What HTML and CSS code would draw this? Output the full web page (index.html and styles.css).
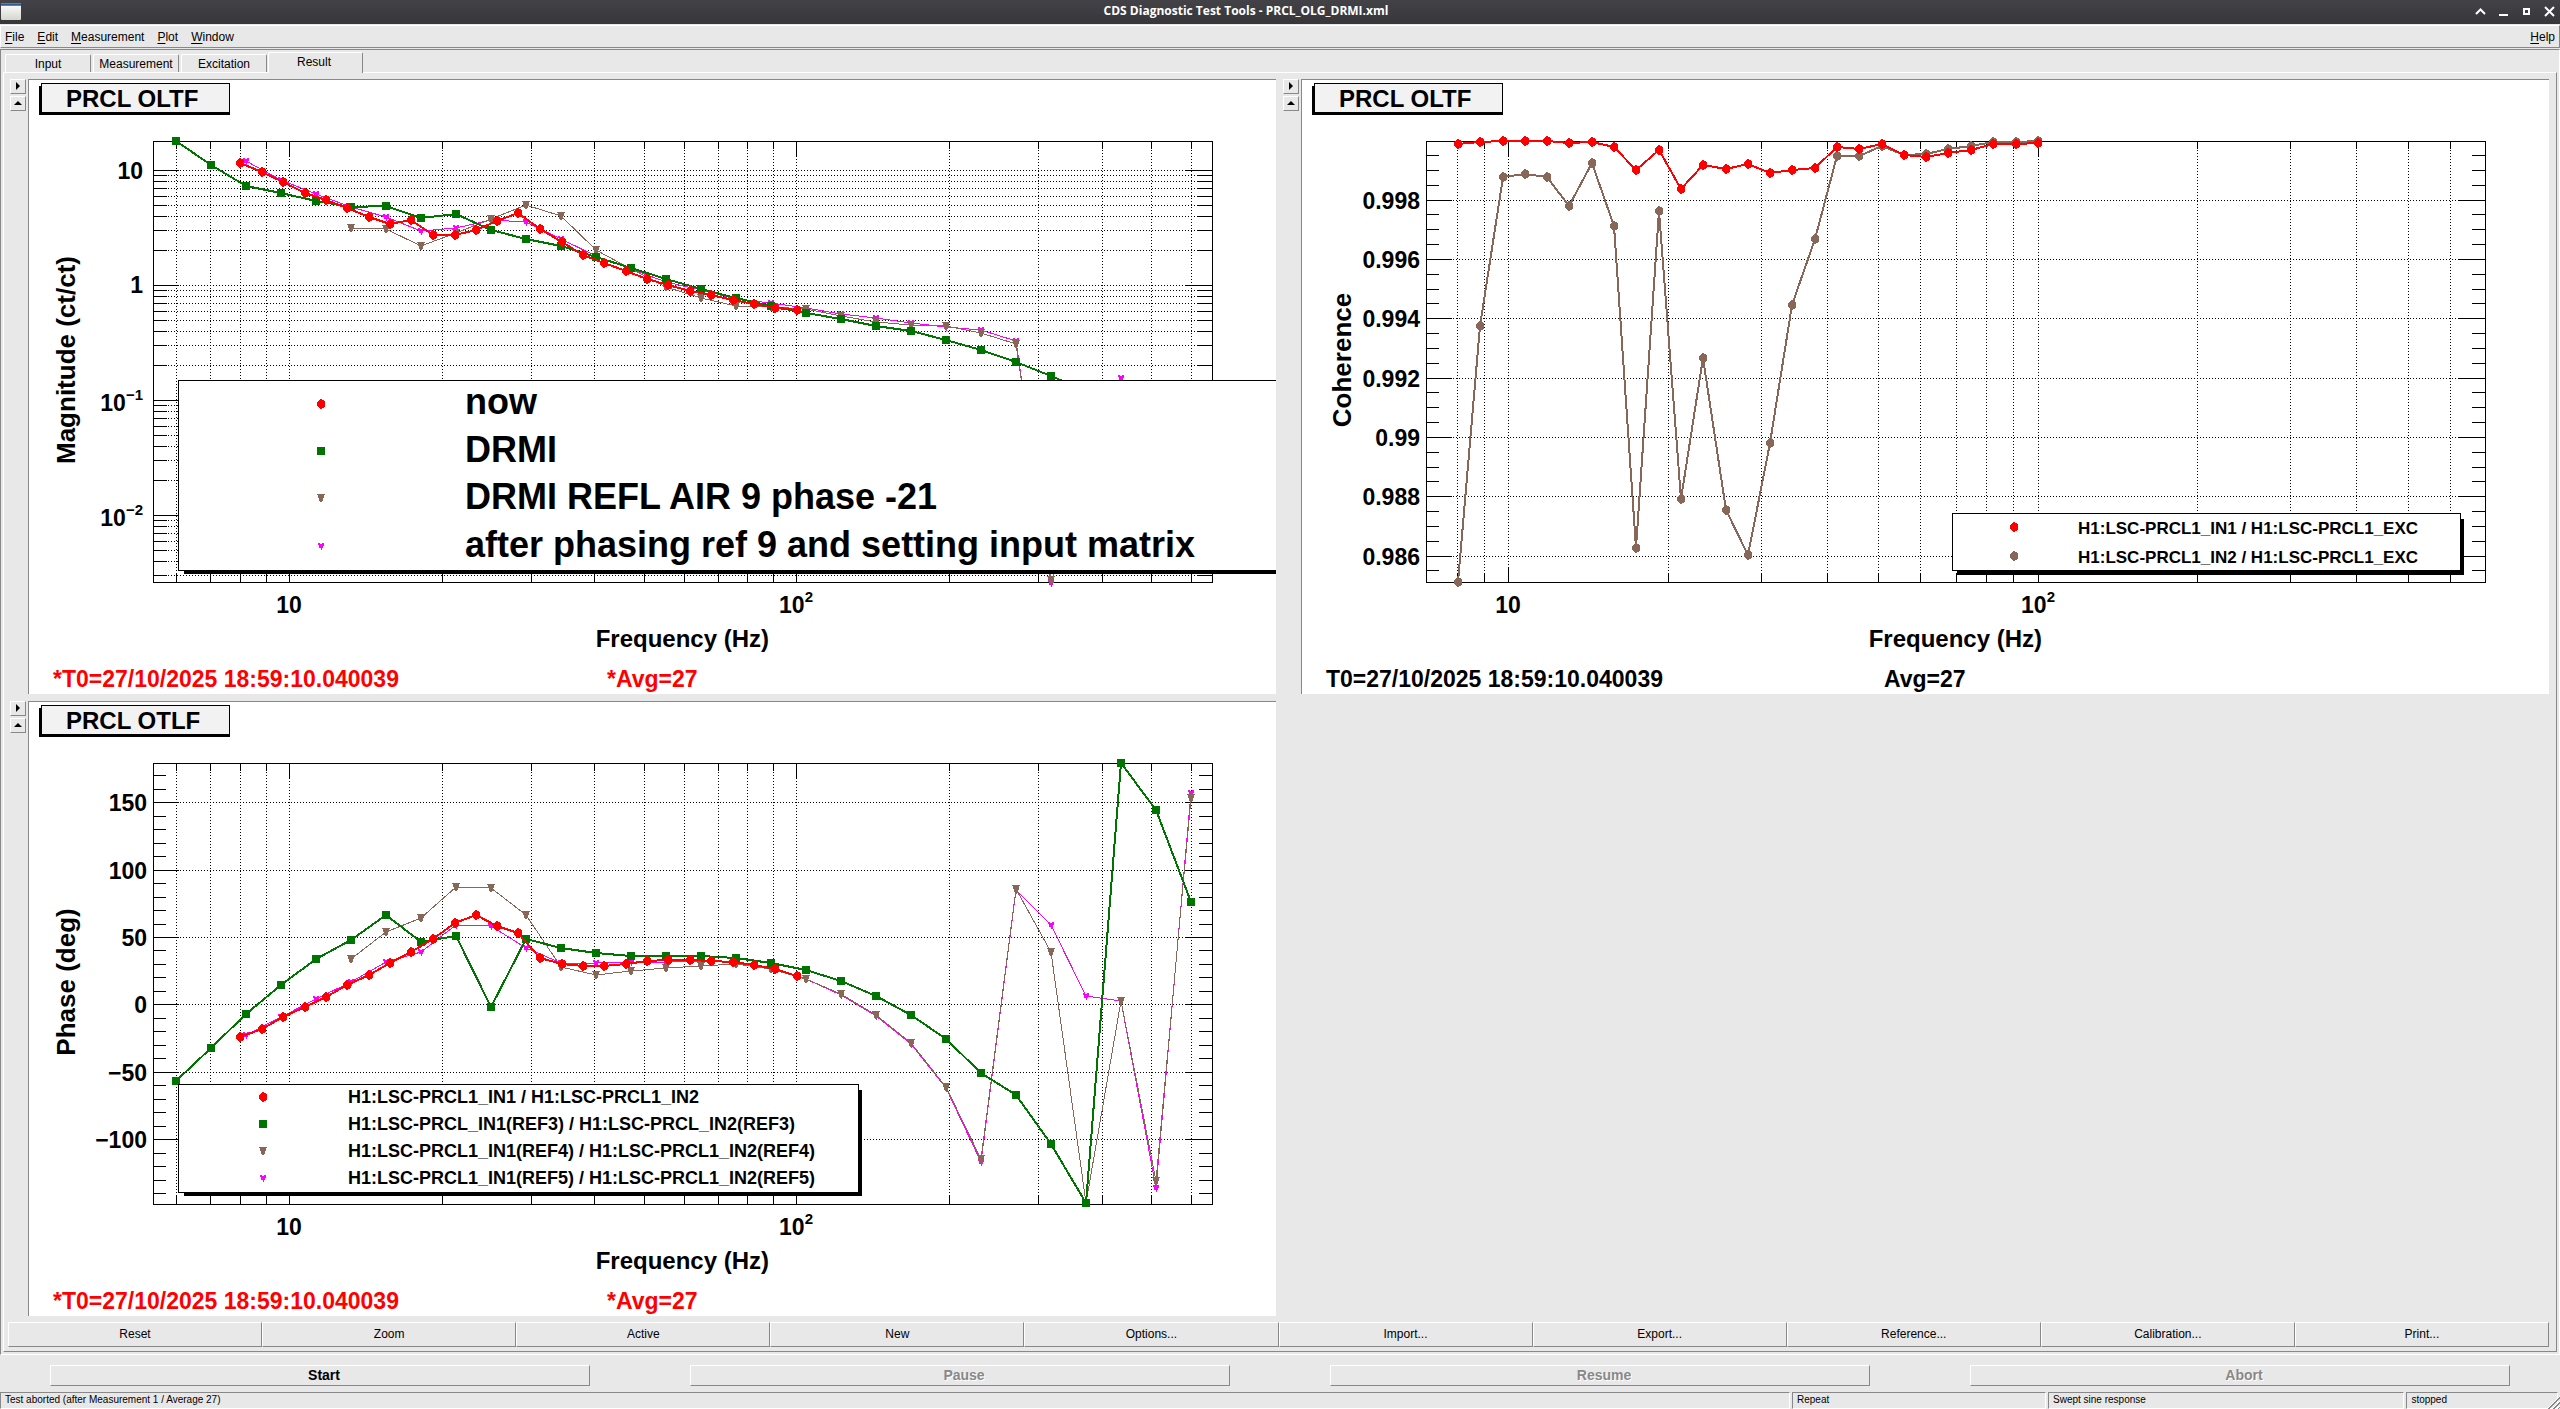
FILE: index.html
```html
<!DOCTYPE html>
<html lang="en">
<head>
<meta charset="utf-8">
<title>CDS Diagnostic Test Tools - PRCL_OLG_DRMI.xml</title>
<link rel="stylesheet" href="styles.css">
</head>
<body>
<header class="titlebar">
  <svg class="app-icon" viewBox="0 0 20 17" aria-hidden="true">
    <defs><linearGradient id="icon-fill" x2="0" y2="1"><stop offset="0" stop-color="#fff"/><stop offset="1" stop-color="#d6d6ce"/></linearGradient></defs>
    <rect width="20" height="17" rx="1" fill="url(#icon-fill)"/>
    <rect width="20" height="3" fill="#5b7fb5"/>
    <rect y="1" width="20" height="1" fill="#2f5a96"/>
  </svg>
  <h1 class="window-title">CDS Diagnostic Test Tools - PRCL_OLG_DRMI.xml</h1>
  <div class="window-controls">
    <button type="button" aria-label="Shade"><svg viewBox="0 0 11 11"><path d="M1 8 5.500 3.500 10 8" fill="none" stroke="#fff" stroke-width="2"/></svg></button>
    <button type="button" aria-label="Minimize"><svg viewBox="0 0 11 11"><path d="M1 9h9" stroke="#fff" stroke-width="2"/></svg></button>
    <button type="button" aria-label="Maximize"><svg viewBox="0 0 11 11"><path d="M3 3h5v5H3z" fill="none" stroke="#fff" stroke-width="2"/></svg></button>
    <button type="button" aria-label="Close"><svg viewBox="0 0 11 11"><path d="M1 1l9 9M10 1l-9 9" stroke="#fff" stroke-width="2"/></svg></button>
  </div>
</header>

<nav class="menubar">
  <button type="button"><u>F</u>ile</button>
  <button type="button"><u>E</u>dit</button>
  <button type="button"><u>M</u>easurement</button>
  <button type="button"><u>P</u>lot</button>
  <button type="button"><u>W</u>indow</button>
  <button type="button" class="help"><u>H</u>elp</button>
</nav>

<main class="frame">
  <div class="tabs" role="tablist">
    <button type="button" role="tab" class="tab">Input</button>
    <button type="button" role="tab" class="tab">Measurement</button>
    <button type="button" role="tab" class="tab">Excitation</button>
    <button type="button" role="tab" class="tab active" aria-selected="true">Result</button>
  </div>

  <section class="panel">
    <div class="plots">
      <article class="plot">
        <div class="plot-tools">
          <button type="button" aria-label="Expand options"><svg viewBox="0 0 14 13"><path d="M5 2v8l4-4z"/></svg></button>
          <button type="button" aria-label="Collapse plot"><svg viewBox="0 0 14 13"><path d="M3 8h8L7 4z"/></svg></button>
        </div>
        <div class="canvas">
          <svg class="chart" viewBox="29 80 1247 614" role="img" aria-label="PRCL OLTF magnitude">
            <defs>
              <marker id="dot" class="mark" markerUnits="userSpaceOnUse" markerWidth="10" markerHeight="12" viewBox="-5 -6 10 12"><path fill="#f00" d="M-4-2-2-4h1v-1h2v1h1l2 2v4L2 4H1v1h-2V4h-1l-2-2z"/></marker>
              <marker id="brown-dot" class="mark" markerUnits="userSpaceOnUse" markerWidth="10" markerHeight="12" viewBox="-5 -6 10 12"><path fill="#886658" d="M-4-2-2-4h1v-1h2v1h1l2 2v4L2 4H1v1h-2V4h-1l-2-2z"/></marker>
              <marker id="square" class="mark" markerUnits="userSpaceOnUse" markerWidth="10" markerHeight="10" viewBox="-5 -5 10 10"><path fill="#007400" d="M-4-4h8v8h-8z"/></marker>
              <marker id="triangle" class="mark" markerUnits="userSpaceOnUse" markerWidth="10" markerHeight="10" viewBox="-5 -5 10 10"><path fill="#886658" d="M-4-4h8L1 4h-2z"/></marker>
              <marker id="star" class="mark" markerUnits="userSpaceOnUse" markerWidth="10" markerHeight="10" viewBox="-5 -5 10 10"><path fill="#f0f" d="M-3-3h1l2 1 2-1h1v2L2 0v2H1v2H0V2h-2V0l-1-1z"/></marker>
              <path id="response-x-grid" d="M176 141V582M210 141V582M240 141V582M266 141V582M289 141V582M442 141V582M531 141V582M594 141V582M644 141V582M684 141V582M718 141V582M747 141V582M773 141V582M796 141V582M949 141V582M1038 141V582M1102 141V582M1151 141V582M1191 141V582"/>
              <path id="response-x-ticks" d="M176 141v8M210 141v8M240 141v8M266 141v8M289 141v15M442 141v8M531 141v8M594 141v8M644 141v8M684 141v8M718 141v8M747 141v8M773 141v8M796 141v15M949 141v8M1038 141v8M1102 141v8M1151 141v8M1191 141v8"/>
              <path id="magnitude-ticks" d="M153 170h26M153 175h14M153 181h14M153 188h14M153 196h14M153 205h14M153 216h14M153 230h14M153 250h14M153 285h26M153 290h14M153 296h14M153 303h14M153 311h14M153 320h14M153 331h14M153 345h14M153 365h14M153 400h26M153 405h14M153 411h14M153 418h14M153 426h14M153 435h14M153 446h14M153 460h14M153 480h14M153 515h26M153 520h14M153 526h14M153 533h14M153 541h14M153 550h14M153 561h14M153 575h14"/>
            </defs>
            <g class="title"><path class="shadow" d="M39 86H230V115H39z"/><rect x="41" y="83" width="188" height="29"/><text x="66" y="107">PRCL OLTF</text></g>
            <g class="grid">
              <use href="#response-x-grid"/>
              <path d="M153 170H1212M153 175H1212M153 181H1212M153 188H1212M153 196H1212M153 205H1212M153 216H1212M153 230H1212M153 250H1212M153 285H1212M153 290H1212M153 296H1212M153 303H1212M153 311H1212M153 320H1212M153 331H1212M153 345H1212M153 365H1212M153 400H1212M153 405H1212M153 411H1212M153 418H1212M153 426H1212M153 435H1212M153 446H1212M153 460H1212M153 480H1212M153 515H1212M153 520H1212M153 526H1212M153 533H1212M153 541H1212M153 550H1212M153 561H1212M153 575H1212"/>
            </g>
            <g class="axes">
              <rect x="153" y="141" width="1059" height="441"/>
              <use href="#response-x-ticks"/><use href="#response-x-ticks" transform="translate(0 723) scale(1 -1)"/>
              <use href="#magnitude-ticks"/><use href="#magnitude-ticks" transform="translate(1365) scale(-1 1)"/>
            </g>
            <polyline class="series magenta" points="246,161 281,180 316,194 351,207 386,217 421,231 456,228 491,220 526,222 561,239 596,256 631,269 666,282 701,290 736,299 771,303 806,308 841,314 876,318 911,323 946,327 981,330 1016,341 1051,583 1086,480 1121,378"/>
            <polyline class="series brown" points="351,228 386,229 421,246 456,233 491,219 526,205 561,216 596,250 631,269 666,287 701,298 736,306 771,307 806,309 841,316 876,322 911,325 946,326 981,333 1016,344 1051,580"/>
            <polyline class="series green" points="176,141 211,165 246,186 281,193 316,201 351,207 386,206 421,218 456,214 491,230 526,239 561,246 596,257 631,268 666,279 701,289 736,298 771,306 806,313 841,319 876,326 911,331 946,340 981,350 1016,362 1051,376 1086,391"/>
            <polyline class="series red" points="240,163 262,172 283,182 305,193 326,200 347,208 369,217 390,224 411,220 433,235 455,235 476,230 497,221 518,213 540,229 562,242 583,255 604,263 626,271 647,279 668,285 690,291 711,295 733,300 754,304 775,308 797,310"/>
            <g class="legend large">
              <path class="shadow" d="M184 386H1290V574H184z"/><rect x="178" y="380" width="1106" height="190"/>
              <polyline class="series red" points="321,404 321,404"/><text x="465" y="414">now</text>
              <polyline class="series green" points="321,451 321,451"/><text x="465" y="462">DRMI</text>
              <polyline class="series brown" points="321,498 321,498"/><text x="465" y="509">DRMI REFL AIR 9 phase -21</text>
              <polyline class="series magenta" points="321,546 321,546"/><text x="465" y="557">after phasing ref 9 and setting input matrix</text>
            </g>
            <g class="ticks-y">
              <text x="143" y="179">10</text><text x="143" y="293">1</text>
              <text x="143" y="411">10<tspan class="sup" dy="-11">−1</tspan></text>
              <text x="143" y="526">10<tspan class="sup" dy="-11">−2</tspan></text>
            </g>
            <g class="ticks-x"><text x="289" y="613">10</text><text x="796" y="613">10<tspan class="sup" dy="-11">2</tspan></text></g>
            <text class="axis-name" transform="translate(75 360) rotate(-90)">Magnitude (ct/ct)</text>
            <text class="axis-x" x="769" y="647">Frequency (Hz)</text>
            <g class="stamp live"><text x="53" y="687">*T0=27/10/2025 18:59:10.040039</text><text x="607" y="687">*Avg=27</text></g>
          </svg>
        </div>
      </article>

      <article class="plot">
        <div class="plot-tools">
          <button type="button" aria-label="Expand options"><svg viewBox="0 0 14 13"><path d="M5 2v8l4-4z"/></svg></button>
          <button type="button" aria-label="Collapse plot"><svg viewBox="0 0 14 13"><path d="M3 8h8L7 4z"/></svg></button>
        </div>
        <div class="canvas">
          <svg class="chart" viewBox="29 80 1247 614" role="img" aria-label="PRCL OLTF coherence">
            <defs>
              <path id="coherence-x-ticks" d="M184 141v8M211 141v8M235 141v15M395 141v8M488 141v8M554 141v8M605 141v8M647 141v8M683 141v8M713 141v8M740 141v8M765 141v15M924 141v8M1017 141v8M1083 141v8M1135 141v8M1177 141v8"/>
              <path id="coherence-ticks" d="M153 155h13M153 170h13M153 185h13M153 200h26M153 214h13M153 229h13M153 244h13M153 259h26M153 274h13M153 289h13M153 303h13M153 318h26M153 333h13M153 348h13M153 363h13M153 378h26M153 392h13M153 407h13M153 422h13M153 437h26M153 452h13M153 467h13M153 481h13M153 496h26M153 511h13M153 526h13M153 541h13M153 556h26M153 570h13"/>
            </defs>
            <g class="title"><path class="shadow" d="M39 86H230V115H39z"/><rect x="41" y="83" width="188" height="29"/><text x="66" y="107">PRCL OLTF</text></g>
            <g class="grid">
              <path d="M184 141V582M211 141V582M235 141V582M395 141V582M488 141V582M554 141V582M605 141V582M647 141V582M683 141V582M713 141V582M740 141V582M765 141V582M924 141V582M1017 141V582M1083 141V582M1135 141V582M1177 141V582"/>
              <path d="M153 200H1212M153 259H1212M153 318H1212M153 378H1212M153 437H1212M153 496H1212M153 556H1212"/>
            </g>
            <g class="axes">
              <rect x="153" y="141" width="1059" height="441"/>
              <use href="#coherence-x-ticks"/><use href="#coherence-x-ticks" transform="translate(0 723) scale(1 -1)"/>
              <use href="#coherence-ticks"/><use href="#coherence-ticks" transform="translate(1365) scale(-1 1)"/>
            </g>
            <polyline class="series umber" points="185,582 207,326 230,177 252,174 274,177 296,206 319,163 341,226 363,548 386,211 408,499 430,358 453,510 475,555 497,443 519,305 542,239 564,156 586,156 609,146 631,155 653,154 675,149 698,146 720,142 743,142 765,141"/>
            <polyline class="series red" points="185,144 207,142 230,141 252,141 274,141 296,143 319,142 341,147 363,170 386,150 408,189 430,165 453,169 475,164 497,173 519,170 542,168 564,147 586,149 609,144 631,155 653,157 675,153 698,150 720,144 743,144 765,143"/>
            <g class="legend small">
              <path class="shadow" d="M684 519H1191V575H684z"/><rect x="679" y="513" width="508" height="57"/>
              <polyline class="series red" points="741,527 741,527"/><text x="805" y="534">H1:LSC-PRCL1_IN1 / H1:LSC-PRCL1_EXC</text>
              <polyline class="series umber" points="741,556 741,556"/><text x="805" y="563">H1:LSC-PRCL1_IN2 / H1:LSC-PRCL1_EXC</text>
            </g>
            <g class="ticks-y">
              <text x="147" y="209">0.998</text><text x="147" y="268">0.996</text><text x="147" y="327">0.994</text><text x="147" y="387">0.992</text><text x="147" y="446">0.99</text><text x="147" y="505">0.988</text><text x="147" y="565">0.986</text>
            </g>
            <g class="ticks-x"><text x="235" y="613">10</text><text x="765" y="613">10<tspan class="sup" dy="-11">2</tspan></text></g>
            <text class="axis-name" transform="translate(78 360) rotate(-90)">Coherence</text>
            <text class="axis-x" x="769" y="647">Frequency (Hz)</text>
            <g class="stamp"><text x="53" y="687">T0=27/10/2025 18:59:10.040039</text><text x="611" y="687">Avg=27</text></g>
          </svg>
        </div>
      </article>

      <article class="plot">
        <div class="plot-tools">
          <button type="button" aria-label="Expand options"><svg viewBox="0 0 14 13"><path d="M5 2v8l4-4z"/></svg></button>
          <button type="button" aria-label="Collapse plot"><svg viewBox="0 0 14 13"><path d="M3 8h8L7 4z"/></svg></button>
        </div>
        <div class="canvas">
          <svg class="chart" viewBox="29 80 1247 614" role="img" aria-label="PRCL OTLF phase">
            <defs>
              <path id="phase-ticks" d="M153 153h13M153 167h13M153 180h26M153 194h13M153 207h13M153 221h13M153 234h13M153 248h26M153 261h13M153 275h13M153 288h13M153 302h13M153 315h26M153 328h13M153 342h13M153 355h13M153 369h13M153 382h26M153 396h13M153 409h13M153 423h13M153 436h13M153 450h26M153 463h13M153 477h13M153 490h13M153 504h13M153 517h26M153 531h13M153 544h13M153 558h13M153 571h13"/>
            </defs>
            <g class="title"><path class="shadow" d="M39 86H230V115H39z"/><rect x="41" y="83" width="188" height="29"/><text x="66" y="107">PRCL OTLF</text></g>
            <g class="grid">
              <use href="#response-x-grid"/>
              <path d="M153 180H1212M153 248H1212M153 315H1212M153 382H1212M153 450H1212M153 517H1212"/>
            </g>
            <g class="axes">
              <rect x="153" y="141" width="1059" height="441"/>
              <use href="#response-x-ticks"/><use href="#response-x-ticks" transform="translate(0 723) scale(1 -1)"/>
              <use href="#phase-ticks"/><use href="#phase-ticks" transform="translate(1365) scale(-1 1)"/>
            </g>
            <polyline class="series magenta" points="246,413 281,395 316,377 351,360 386,340 421,330 456,303 491,304 526,326 561,341 596,341 631,340 666,340 701,339 736,340 771,347 806,357 841,373 876,394 911,422 946,466 981,540 1016,268 1051,303 1086,374 1121,379 1156,566 1191,171"/>
            <polyline class="series brown" points="351,337 386,310 421,296 456,265 491,266 526,293 561,345 596,353 631,349 666,346 701,344 736,342 771,347 806,357 841,372 876,393 911,421 946,465 981,537 1016,267 1051,330 1086,581 1121,379 1156,559 1191,176"/>
            <polyline class="series green" points="176,459 211,426 246,392 281,363 316,337 351,318 386,293 421,320 456,314 491,385 526,317 561,326 596,331 631,334 666,334 701,334 736,336 771,341 806,348 841,359 876,374 911,393 946,417 981,451 1016,473 1051,522 1086,581 1121,141 1156,188 1191,280"/>
            <polyline class="series red" points="240,415 262,407 283,395 305,385 326,375 347,363 369,353 390,341 411,330 433,317 455,301 476,293 497,304 518,311 540,336 562,342 583,344 604,344 626,342 647,339 668,338 690,338 711,339 733,340 754,343 775,347 797,354"/>
            <g class="legend medium">
              <path class="shadow" d="M184 468H862V574H184z"/><rect x="178" y="462" width="680" height="108"/>
              <polyline class="series red" points="263,475 263,475"/><text x="348" y="481">H1:LSC-PRCL1_IN1 / H1:LSC-PRCL1_IN2</text>
              <polyline class="series green" points="263,502 263,502"/><text x="348" y="508">H1:LSC-PRCL_IN1(REF3) / H1:LSC-PRCL_IN2(REF3)</text>
              <polyline class="series brown" points="263,529 263,529"/><text x="348" y="535">H1:LSC-PRCL1_IN1(REF4) / H1:LSC-PRCL1_IN2(REF4)</text>
              <polyline class="series magenta" points="263,556 263,556"/><text x="348" y="562">H1:LSC-PRCL1_IN1(REF5) / H1:LSC-PRCL1_IN2(REF5)</text>
            </g>
            <g class="ticks-y">
              <text x="147" y="189">150</text><text x="147" y="257">100</text><text x="147" y="324">50</text><text x="147" y="391">0</text><text x="147" y="459">−50</text><text x="147" y="526">−100</text>
            </g>
            <g class="ticks-x"><text x="289" y="613">10</text><text x="796" y="613">10<tspan class="sup" dy="-11">2</tspan></text></g>
            <text class="axis-name" transform="translate(75 360) rotate(-90)">Phase (deg)</text>
            <text class="axis-x" x="769" y="647">Frequency (Hz)</text>
            <g class="stamp live"><text x="53" y="687">*T0=27/10/2025 18:59:10.040039</text><text x="607" y="687">*Avg=27</text></g>
          </svg>
        </div>
      </article>
    </div>

    <div class="plot-actions">
      <button type="button">Reset</button>
      <button type="button">Zoom</button>
      <button type="button">Active</button>
      <button type="button">New</button>
      <button type="button">Options...</button>
      <button type="button">Import...</button>
      <button type="button">Export...</button>
      <button type="button">Reference...</button>
      <button type="button">Calibration...</button>
      <button type="button">Print...</button>
    </div>
  </section>
</main>

<div class="run-controls">
  <button type="button">Start</button>
  <button type="button" disabled>Pause</button>
  <button type="button" disabled>Resume</button>
  <button type="button" disabled>Abort</button>
</div>

<footer class="statusbar">
  <span>Test aborted (after Measurement 1 / Average 27)</span>
  <span>Repeat</span>
  <span>Swept sine response</span>
  <span>stopped</span>
  <svg class="grip" viewBox="0 0 13 13" aria-hidden="true"><path d="M0 13 13 0M5 13l8-8M10 13l3-3" stroke="#fff"/><path d="M1 13 13 1M2 13 13 2M6 13l7-7M7 13l6-6M11 13l2-2" stroke="#888"/></svg>
</footer>
</body>
</html>
```
FILE: styles.css
```css
:root {
  --face: #e8e8e8;
  --light: #fff;
  --dark: #888;
}

* {
  box-sizing: border-box;
}

body {
  margin: 0;
  background: var(--face);
  color: #000;
  font: 12px/14px "Liberation Sans", Arial, sans-serif;
}

button {
  margin: 0;
  padding: 0;
  border: 0;
  border-radius: 0;
  background: none;
  color: inherit;
  font: inherit;
}

/* Window title */
.titlebar {
  display: grid;
  grid-template-columns: 1fr auto 1fr;
  align-items: center;
  height: 24px;
  padding: 0 5px 2px 1px;
  background: linear-gradient(#434247, #37363a);
}

.app-icon {
  width: 20px;
  height: 17px;
}

.window-title {
  margin: 0;
  padding-right: 64px;
  color: #fff;
  font: bold 12px/16px "Open Sans", sans-serif;
}

.window-controls {
  display: flex;
  justify-content: flex-end;
  gap: 12px;
}

.window-controls button,
.window-controls svg {
  display: block;
  width: 11px;
  height: 11px;
}

/* Menus */
.menubar {
  display: flex;
  gap: 13px;
  height: 23px;
  margin-top: 1px;
  padding: 0 4px;
  border: 1px solid var(--light);
  border-right-color: var(--dark);
  border-bottom-color: var(--dark);
}

.menubar u {
  text-underline-offset: 2px;
}

.menubar .help {
  margin-left: auto;
}

/* Tabbed frame */
.frame {
  margin-top: 1px;
  padding: 0 2px 2px;
  border: 1px solid var(--dark);
  border-right-color: var(--light);
  border-bottom-color: var(--light);
}

.tabs {
  display: flex;
  align-items: flex-end;
  gap: 2px;
  height: 22px;
  padding-left: 2px;
}

.tab {
  width: 86px;
  height: 18px;
  border: 1px solid var(--light);
  border-right-color: var(--dark);
  border-bottom: 0;
  border-radius: 2px 2px 0 0;
}

.tab.active {
  z-index: 1;
  width: 95px;
  height: 21px;
  margin: 0 0 -1px -1px;
  padding: 0 3px 3px 0;
  background: var(--face);
}

.panel {
  border: 1px solid var(--light);
  border-right-color: var(--dark);
  border-bottom-color: var(--dark);
}

.plots {
  display: grid;
  grid-template-columns: 1fr 1fr;
  gap: 7px;
  padding: 6px 7px 6px 6px;
}

.plot {
  display: grid;
  grid-template-columns: 16px 1fr;
  gap: 2px;
}

.plot-tools {
  display: flex;
  flex-direction: column;
  gap: 2px;
}

.plot-tools button {
  height: 15px;
  border: 1px solid var(--light);
  border-right-color: var(--dark);
  border-bottom-color: var(--dark);
}

.plot-tools svg {
  display: block;
}

.canvas {
  border: solid var(--dark);
  border-width: 1px 0 0 1px;
  background: #fff;
}

/* Charts */
.chart {
  display: block;
  width: 100%;
  overflow: hidden;
  font-weight: bold;
  font-size: 23px;
}

.chart rect,
.chart path,
.chart polyline,
.mark {
  shape-rendering: crispEdges;
}

.mark {
  overflow: visible;
}

.title rect {
  fill: #f2f2f2;
  stroke: #000;
}

.title text,
.axis-x {
  font-size: 24px;
}

.grid {
  stroke: #000;
  stroke-dasharray: 1 2;
}

.axes {
  fill: none;
  stroke: #000;
}

.series {
  fill: none;
}

.red {
  stroke: #f00;
  stroke-width: 2px;
  marker: url(#dot);
}

.green {
  stroke: #007400;
  stroke-width: 2px;
  marker: url(#square);
}

.brown {
  stroke: #886658;
  marker: url(#triangle);
}

.umber {
  stroke: #886658;
  stroke-width: 2px;
  marker: url(#brown-dot);
}

.magenta {
  stroke: #f0f;
  marker: url(#star);
}

.legend rect {
  fill: #fff;
  stroke: #000;
}

.large {
  font-size: 36px;
}

.medium {
  font-size: 18px;
}

.small {
  font-size: 17px;
}

.ticks-y,
.axis-x {
  text-anchor: end;
}

.ticks-x,
.axis-name {
  text-anchor: middle;
}

.sup {
  font-size: 15px;
}

.axis-name {
  font-size: 26px;
}

.live {
  fill: #f00;
}

/* Plot actions */
.plot-actions {
  display: grid;
  grid-template-columns: repeat(10, 1fr);
  padding: 0 7px 4px 4px;
}

.plot-actions button,
.run-controls button {
  padding-bottom: 2px;
  border: 1px solid var(--light);
  border-right-color: var(--dark);
  border-bottom-color: var(--dark);
}

.plot-actions button {
  height: 25px;
}

/* Run controls */
.run-controls {
  display: grid;
  grid-template-columns: repeat(4, 1fr);
  gap: 100px;
  padding: 10px 50px 6px;
}

.run-controls button {
  height: 21px;
  padding-left: 8px;
  font-weight: bold;
  font-size: 14px;
}

.run-controls button:disabled {
  color: var(--dark);
  text-shadow: 1px 1px var(--light);
}

/* Status */
.statusbar {
  position: relative;
  display: grid;
  grid-template-columns: 70fr 10fr 14fr 6fr;
  font-size: 10px;
}

.statusbar span {
  height: 17px;
  margin-right: 2px;
  padding: 0 4px;
  border: 1px solid var(--dark);
  border-right-color: var(--light);
  border-bottom-color: var(--light);
}

.grip {
  position: absolute;
  right: 0;
  bottom: 0;
  width: 13px;
  height: 13px;
}
```
